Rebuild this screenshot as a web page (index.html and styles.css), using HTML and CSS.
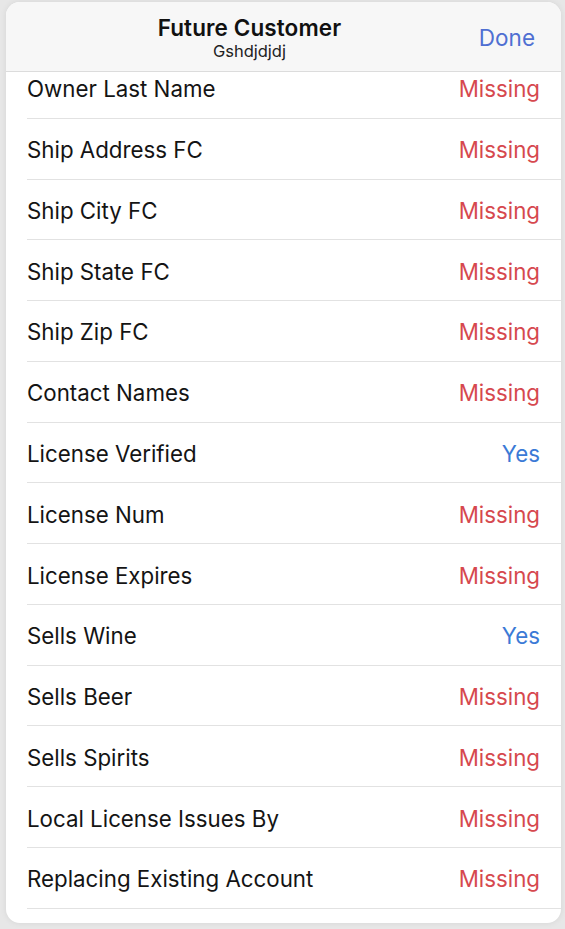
FILE: index.html
```html
<!DOCTYPE html>
<html lang="en">
<head>
    <meta charset="UTF-8">
    <meta name="viewport" content="width=device-width, initial-scale=1.0">
    <title>Future Customer</title>
    <link rel="stylesheet" href="styles.css">
</head>
<body>
    <div class="sheet">
        <div class="sheet-header">
            <div class="titles">
                <div class="title">Future Customer</div>
                <div class="subtitle">Gshdjdjdj</div>
            </div>
            <button class="done-btn">Done</button>
        </div>
        <div class="list-wrap">
            <ul class="field-list">
                <li class="row"><span class="label">Owner Last Name</span><span class="value missing">Missing</span></li>
                <li class="row"><span class="label">Ship Address FC</span><span class="value missing">Missing</span></li>
                <li class="row"><span class="label">Ship City FC</span><span class="value missing">Missing</span></li>
                <li class="row"><span class="label">Ship State FC</span><span class="value missing">Missing</span></li>
                <li class="row"><span class="label">Ship Zip FC</span><span class="value missing">Missing</span></li>
                <li class="row"><span class="label">Contact Names</span><span class="value missing">Missing</span></li>
                <li class="row"><span class="label">License Verified</span><span class="value yes">Yes</span></li>
                <li class="row"><span class="label">License Num</span><span class="value missing">Missing</span></li>
                <li class="row"><span class="label">License Expires</span><span class="value missing">Missing</span></li>
                <li class="row"><span class="label">Sells Wine</span><span class="value yes">Yes</span></li>
                <li class="row"><span class="label">Sells Beer</span><span class="value missing">Missing</span></li>
                <li class="row"><span class="label">Sells Spirits</span><span class="value missing">Missing</span></li>
                <li class="row"><span class="label">Local License Issues By</span><span class="value missing">Missing</span></li>
                <li class="row"><span class="label">Replacing Existing Account</span><span class="value missing">Missing</span></li>
            </ul>
        </div>
    </div>
</body>
</html>
```

FILE: styles.css
```css
html, body {
    height: 100%;
}
body {
    font-family: Inter, "Noto Sans", sans-serif;
    margin: 0;
    padding: 2px 4px 6px 6px;
    box-sizing: border-box;
    background-color: #e7e7e7;
    color: #111;
    overflow: hidden;
}
.sheet {
    height: 921px;
    background: white;
    border-radius: 14px;
    overflow: hidden;
    display: flex;
    flex-direction: column;
    box-shadow: 0 0 6px rgba(0, 0, 0, 0.08);
}
.sheet-header {
    height: 69px;
    flex: none;
    background-color: #f7f7f7;
    border-bottom: 1px solid #dcdcdc;
    display: flex;
    align-items: center;
}
.titles {
    flex: 1;
    text-align: center;
    padding-left: 14px;
    margin-top: 1px;
}
.title {
    font-size: 22.5px;
    font-weight: 600;
    line-height: 27px;
    letter-spacing: 0.1px;
}
.subtitle {
    font-size: 16.5px;
    line-height: 20px;
    color: #222;
}
button {
    cursor: pointer;
    background: none;
    border: none;
    outline: none;
    font-family: inherit;
}
.done-btn {
    color: #4f6fd2;
    font-size: 22.5px;
    padding: 0;
    margin: 2px 26px 0 0;
}
.list-wrap {
    flex: 1;
    overflow: hidden;
}
.field-list {
    list-style: none;
    margin: -14px 0 0 21px;
    padding: 0;
}
.row {
    height: 60.77px;
    box-sizing: border-box;
    border-bottom: 1px solid #e2e2e2;
    display: flex;
    align-items: center;
    justify-content: space-between;
    padding: 2px 21px 0 0;
    font-size: 22.3px;
}
.label {
    color: #141414;
}
.missing {
    color: #d6484e;
}
.yes {
    color: #3b7ad6;
}
```
